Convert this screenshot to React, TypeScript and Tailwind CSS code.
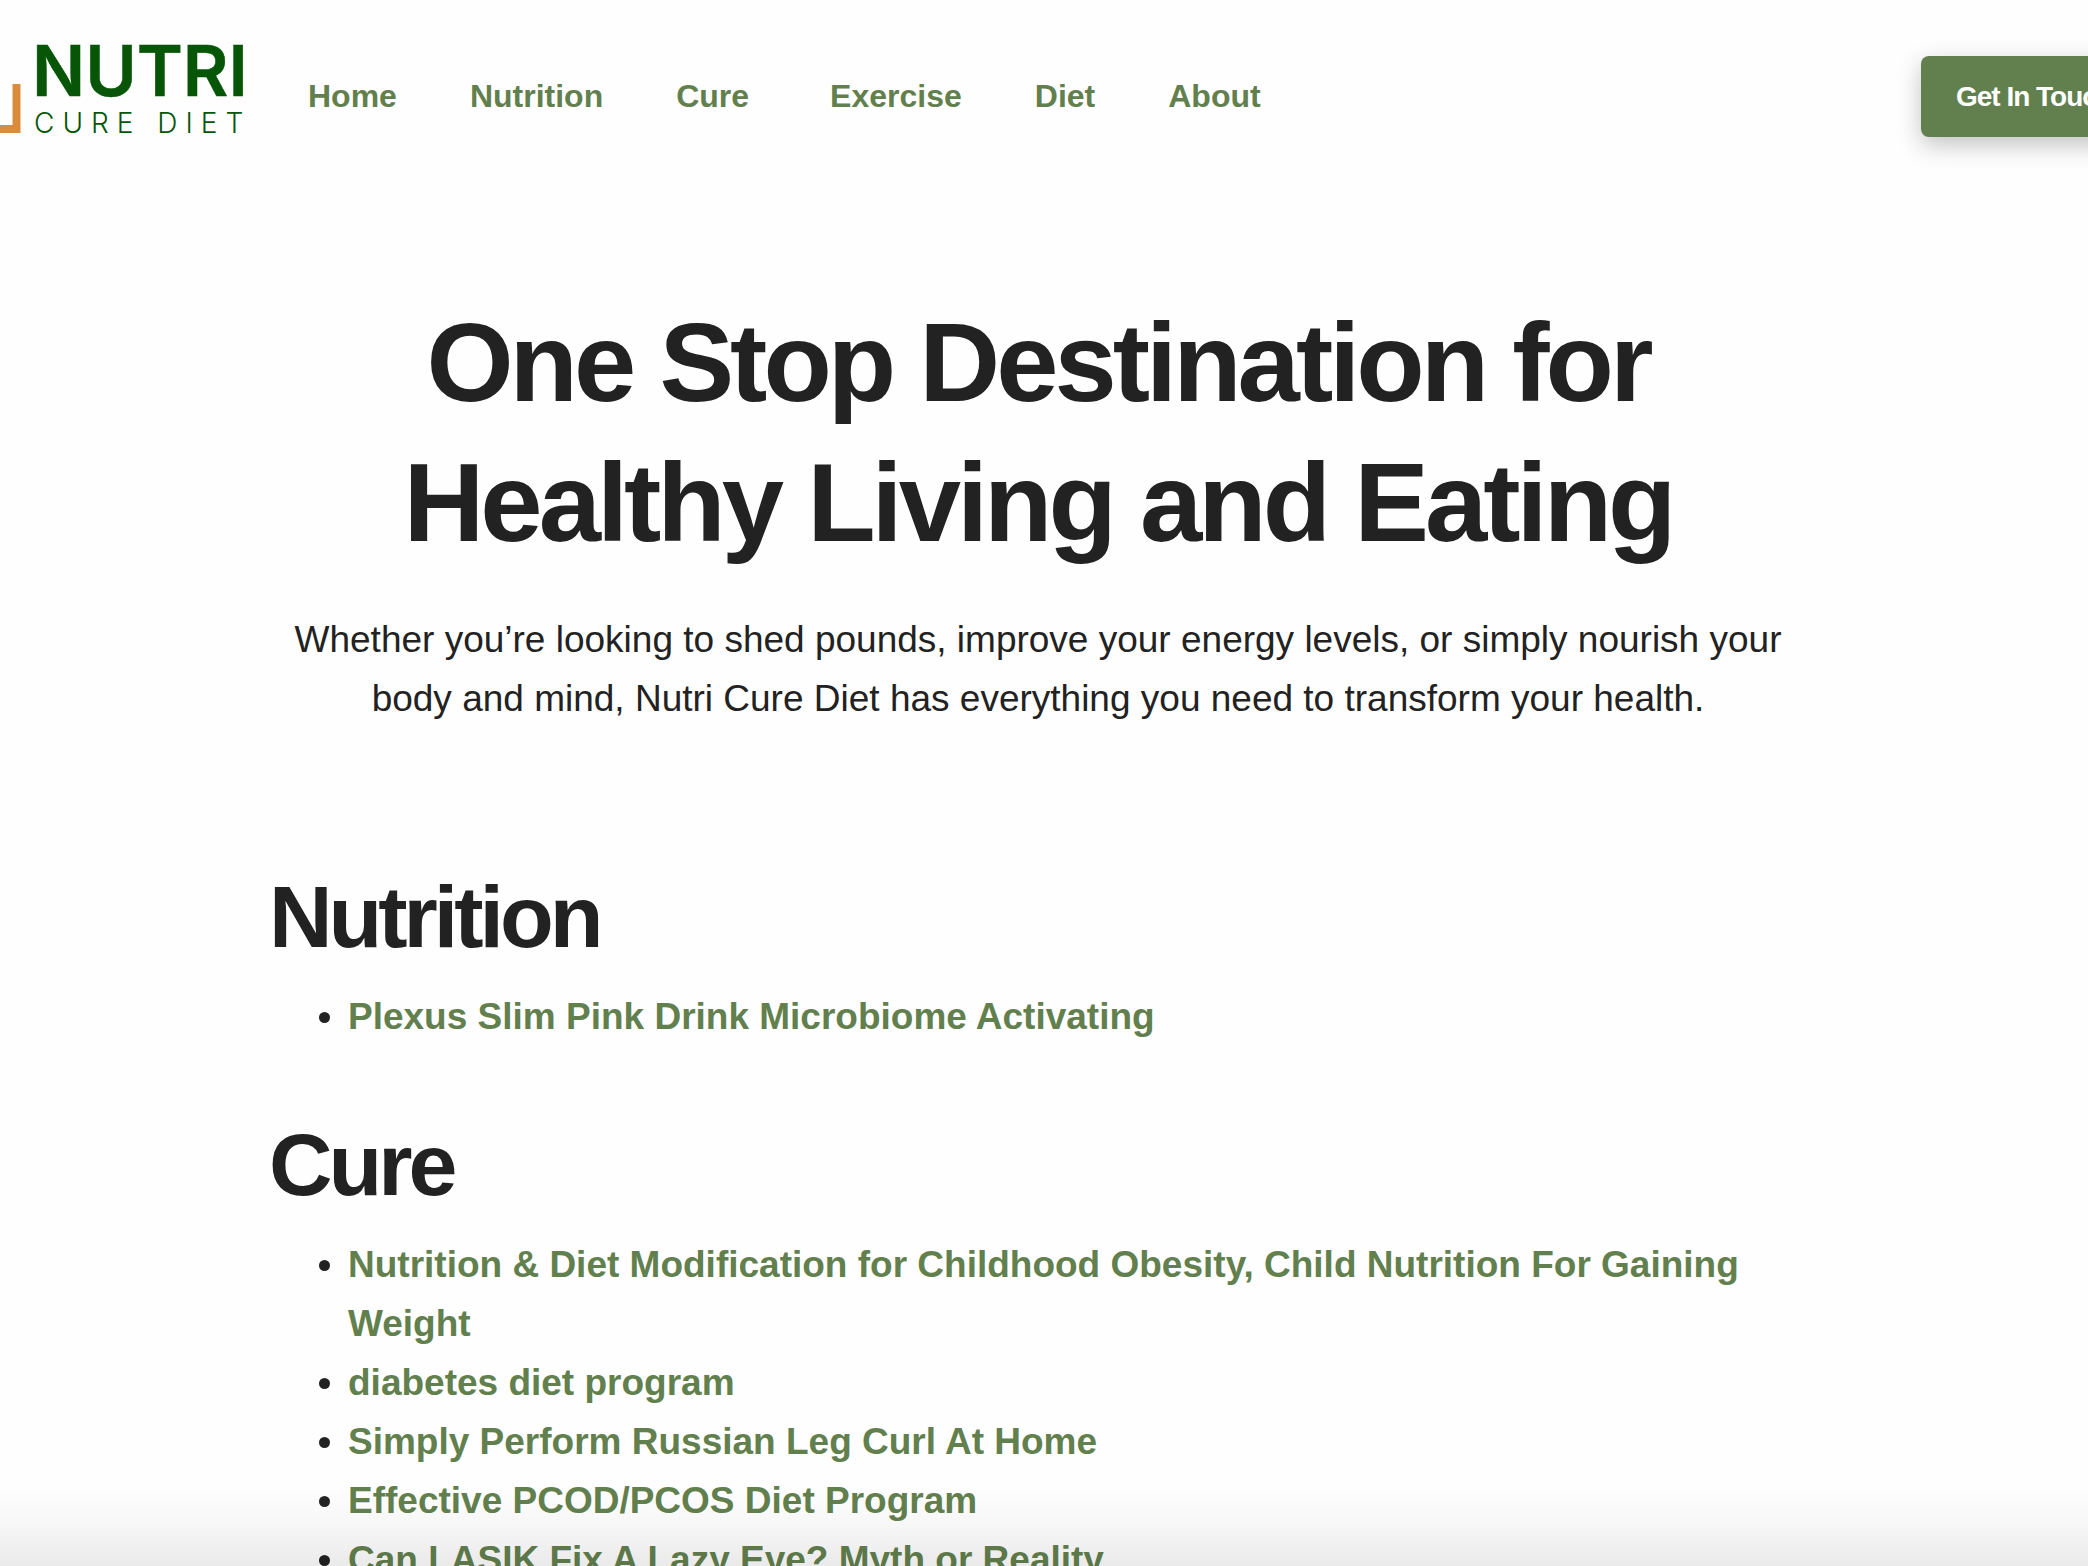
interface NavItem {
  label: string;
  hasMenu?: boolean;
}

interface Section {
  title: string;
  links: string[];
}

const NAV_ITEMS: NavItem[] = [
  { label: "Home" },
  { label: "Nutrition" },
  { label: "Cure", hasMenu: true },
  { label: "Exercise" },
  { label: "Diet" },
  { label: "About" },
];

const SECTIONS: Section[] = [
  {
    title: "Nutrition",
    links: ["Plexus Slim Pink Drink Microbiome Activating"],
  },
  {
    title: "Cure",
    links: [
      "Nutrition & Diet Modification for Childhood Obesity, Child Nutrition For Gaining Weight",
      "diabetes diet program",
      "Simply Perform Russian Leg Curl At Home",
      "Effective PCOD/PCOS Diet Program",
      "Can LASIK Fix A Lazy Eye? Myth or Reality",
    ],
  },
];

function Logo() {
  return (
    <a href="#" aria-label="Nutri Cure Diet" className="shrink-0">
      <svg width="256" height="141" viewBox="0 26 256 141" className="block">
        <path d="M0 129H16.5V84" fill="none" stroke="#d98d3c" strokeWidth="8" />
        <text x="32" y="96" fill="#075507" stroke="#075507" strokeWidth="0.5" fontFamily="Inter, sans-serif" fontSize="70" fontWeight="600">
          NUTRI
        </text>
        <text x="34" y="133" fill="#075507" fontFamily="Inter, sans-serif" fontSize="28" fontWeight="300" letterSpacing="8">
          CURE DIET
        </text>
      </svg>
    </a>
  );
}

function Header() {
  return (
    <header className="flex h-[193px] items-center">
      <Logo />
      <nav className="ml-[52px] flex gap-[73px] text-[32px] leading-[41px] font-bold text-[#62804d]">
        {NAV_ITEMS.map((item) => (
          <a key={item.label} href="#" className={item.hasMenu ? "pr-2" : ""}>
            {item.label}
          </a>
        ))}
      </nav>
      {/* runs past the right edge of the window */}
      <button
        type="button"
        className="-mr-[60px] ml-auto h-[81px] shrink-0 rounded-lg bg-[#62804d] px-[35px] text-[28px] font-bold tracking-[-1px] text-white shadow-[0_8px_24px_rgba(0,0,0,0.24)]"
      >
        Get In Touch
      </button>
    </header>
  );
}

function LinkSection({ title, links }: Section) {
  return (
    <section>
      <h2 className="text-[88px] leading-[109px] font-bold tracking-[-4px]">{title}</h2>
      <ul className="mt-4 list-disc pl-[79px] text-[37px] leading-[59px]">
        {links.map((link) => (
          <li key={link}>
            <a href="#" className="font-bold text-[#62804d]">
              {link}
            </a>
          </li>
        ))}
      </ul>
    </section>
  );
}

export default function App() {
  return (
    <div className="relative h-screen overflow-hidden bg-[#fefefe] font-['Liberation_Sans',Arial,sans-serif] text-[#222222]">
      <Header />
      <main className="mx-auto max-w-[1550px] pt-[100px] pr-3">
        <div className="text-center">
          <h1 className="text-[112px] leading-[140px] font-bold tracking-[-4px]">
            One Stop Destination for
            <br />
            Healthy Living and Eating
          </h1>
          <p className="mt-[37px] text-[37px] leading-[59px]">
            Whether you’re looking to shed pounds, improve your energy levels, or simply nourish your body and mind,
            Nutri Cure Diet has everything you need to transform your health.
          </p>
        </div>
        <div className="mt-[134px] flex flex-col gap-16">
          {SECTIONS.map((section) => (
            <LinkSection key={section.title} {...section} />
          ))}
        </div>
      </main>
      <div className="pointer-events-none absolute inset-x-0 bottom-0 h-20 bg-linear-to-t from-black/8 via-black/3 to-transparent" />
    </div>
  );
}
